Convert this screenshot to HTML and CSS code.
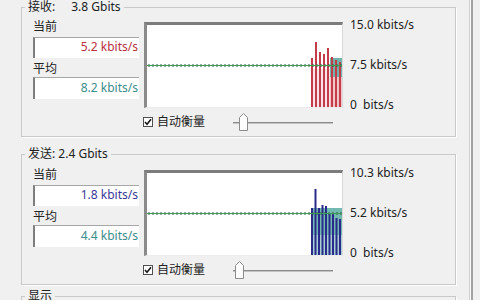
FILE: index.html
```html
<!DOCTYPE html>
<html lang="zh-CN">
<head>
  <meta charset="UTF-8" />
  <meta name="viewport" content="width=device-width, initial-scale=1.0"/>
  <title>网络流量</title>
  <link rel="stylesheet" href="styles.css">
</head>
<body>

<div class="janela">

  <!-- Receber -->
  <fieldset class="grupo primeiro">
    <legend>接收:<span class="total">3.8 Gbits</span></legend>
    <div class="corpo">
      <div class="valores">
        <div class="rotulo">当前</div>
        <div class="caixa rx">5.2 kbits/s</div>
        <div class="rotulo media">平均</div>
        <div class="caixa media cor-media">8.2 kbits/s</div>
      </div>
      <div class="grafico">
        <svg width="195" height="82" viewBox="0 0 195 82">
          <rect x="164" y="44" width="19" height="38" fill="#f8e4e6"/>
          <rect x="183" y="33" width="12" height="19" fill="#6fb3ab"/>
          <rect x="183" y="52" width="12" height="30" fill="#f1c4c8"/>
          <g fill="#c43b49">
            <rect x="164" y="33" width="2" height="49"/>
            <rect x="168" y="17" width="2" height="65"/>
            <rect x="172" y="27" width="2" height="55"/>
            <rect x="176" y="29" width="2" height="53"/>
            <rect x="180" y="23" width="2" height="59"/>
            <rect x="184" y="32" width="2" height="50"/>
            <rect x="188" y="35" width="2" height="47"/>
            <rect x="192" y="37" width="2" height="45"/>
          </g>
          <line x1="1.5" y1="40.5" x2="195" y2="40.5" stroke="#2f5f3c" stroke-width="3" stroke-dasharray="1 3"/>
          <line x1="0" y1="40.5" x2="195" y2="40.5" stroke="#3f9a58" stroke-width="1"/>
        </svg>
      </div>
      <div class="escala">
        <span>15.0 kbits/s</span>
        <span>7.5 kbits/s</span>
        <span>0  bits/s</span>
      </div>
      <div class="controles">
        <span class="check">
          <svg width="8" height="8" viewBox="0 0 8 8"><path d="M1 4 L3 6.2 L7 1.2" fill="none" stroke="#1a1a1a" stroke-width="1.6"/></svg>
        </span>
        <span class="check-texto">自动衡量</span>
        <div class="trilha">
          <span class="cursor" style="left: 6px;">
            <svg width="9" height="18" viewBox="0 0 9 18"><path d="M0.5 17.5 V4.5 L4.5 0.5 L8.5 4.5 V17.5 Z" fill="#fdfdfd" stroke="#8c8c8c"/></svg>
          </span>
        </div>
      </div>
    </div>
  </fieldset>

  <!-- Enviar -->
  <fieldset class="grupo">
    <legend>发送: 2.4 Gbits</legend>
    <div class="corpo">
      <div class="valores">
        <div class="rotulo">当前</div>
        <div class="caixa tx">1.8 kbits/s</div>
        <div class="rotulo media">平均</div>
        <div class="caixa media cor-media">4.4 kbits/s</div>
      </div>
      <div class="grafico">
        <svg width="195" height="82" viewBox="0 0 195 82">
          <rect x="165" y="35" width="30" height="27" fill="#72b9b2"/>
          <rect x="165" y="62" width="30" height="20" fill="#a9cfd3"/>
          <g fill="#2a2a8c">
            <rect x="164" y="35" width="2" height="47"/>
            <rect x="167.5" y="16" width="2" height="66"/>
            <rect x="171" y="35" width="2" height="47"/>
            <rect x="174.5" y="32" width="2" height="50"/>
            <rect x="178" y="33" width="2" height="49"/>
            <rect x="181.5" y="40" width="2" height="42"/>
            <rect x="185" y="41" width="2" height="41"/>
            <rect x="188.5" y="45" width="2" height="37"/>
            <rect x="192" y="46" width="2" height="36"/>
          </g>
          <line x1="1.5" y1="40.5" x2="195" y2="40.5" stroke="#2f5f3c" stroke-width="3" stroke-dasharray="1 3"/>
          <line x1="0" y1="40.5" x2="195" y2="40.5" stroke="#3f9a58" stroke-width="1"/>
        </svg>
      </div>
      <div class="escala">
        <span>10.3 kbits/s</span>
        <span>5.2 kbits/s</span>
        <span>0  bits/s</span>
      </div>
      <div class="controles">
        <span class="check">
          <svg width="8" height="8" viewBox="0 0 8 8"><path d="M1 4 L3 6.2 L7 1.2" fill="none" stroke="#1a1a1a" stroke-width="1.6"/></svg>
        </span>
        <span class="check-texto">自动衡量</span>
        <div class="trilha">
          <span class="cursor" style="left: 2px;">
            <svg width="9" height="18" viewBox="0 0 9 18"><path d="M0.5 17.5 V4.5 L4.5 0.5 L8.5 4.5 V17.5 Z" fill="#fdfdfd" stroke="#8c8c8c"/></svg>
          </span>
        </div>
      </div>
    </div>
  </fieldset>

  <!-- Exibir -->
  <fieldset class="grupo ultimo">
    <legend>显示</legend>
    <div class="vazio"></div>
  </fieldset>

</div>

</body>
</html>
```

FILE: styles.css
```css
html, body {
  margin: 0;
  height: 300px;
  overflow: hidden;
}
body {
  background-color: #f0f0f0;
  font-family: "Noto Sans", "Noto Sans CJK SC", sans-serif;
  font-size: 12px;
  color: #222;
}
.janela {
  width: 469px;
  height: 300px;
  border-right: 1px solid #cfcfcf;
  box-shadow: 1px 0 0 #fafafa, 3px 0 0 #a2a2a2;
}

/* Caixas de grupo */
.grupo {
  margin: 0 0 0 21px;
  width: 435px;
  box-sizing: border-box;
  border: 1px solid #c9c9c9;
  padding: 8px 0 5px 11px;
  box-shadow: 1px 1px 0 #fff;
  min-width: 0;
}
.grupo.primeiro {
  padding-top: 7px;
}
.grupo + .grupo {
  margin-top: 10px;
}
.grupo.ultimo {
  margin-top: 4px;
}
.grupo legend {
  padding: 0 3px;
  margin-left: -8px;
  line-height: 14px;
}
.grupo legend .total {
  margin-left: 16px;
}

.corpo {
  display: grid;
  grid-template-columns: 106px 199px 1fr;
  grid-template-rows: 87px 18px;
  column-gap: 5px;
  row-gap: 5px;
}

/* Valores atuais */
.rotulo {
  line-height: 12px;
  margin-bottom: 4px;
}
.rotulo.media {
  margin-top: 5px;
  margin-bottom: 2px;
}
.caixa {
  height: 21px;
  box-sizing: border-box;
  background-color: #fff;
  border-style: solid;
  border-width: 1px 0 0 2px;
  border-color: #a6a6a6 #fff #fff #7e7e7e;
  text-align: right;
  line-height: 18px;
  padding-right: 1px;
}
.caixa.media {
  height: 22px;
  line-height: 19px;
}
.rx { color: #b9323f; }
.tx { color: #3a3a98; }
.cor-media { color: #3b8c8c; }

/* Grafico */
.grafico {
  margin-top: 1px;
  height: 86px;
  box-sizing: border-box;
  background-color: #fff;
  border-style: solid;
  border-width: 3px 1px 1px 3px;
  border-color: #7c7c7c #dadada #ececec #8a8a8a;
}
.grafico svg {
  display: block;
}

.escala {
  margin-top: -2px;
  margin-left: 2px;
  height: 92px;
  display: flex;
  flex-direction: column;
  justify-content: space-between;
  white-space: pre;
}
.escala span {
  line-height: 12px;
}

/* Controles */
.controles {
  grid-column: 2 / 4;
  margin-left: -1px;
  display: flex;
  align-items: center;
}
.check {
  width: 10px;
  height: 10px;
  box-sizing: border-box;
  border: 1px solid #505050;
  background-color: #fff;
  display: flex;
  align-items: center;
  justify-content: center;
}
.check svg {
  display: block;
}
.check-texto {
  margin-left: 4px;
  line-height: 12px;
}
.trilha {
  position: relative;
  margin-left: 28px;
  width: 100px;
  height: 18px;
}
.trilha::before {
  content: "";
  display: block;
  margin-top: 9px;
  border-top: 1px solid #8a8a8a;
  border-bottom: 1px solid #c4c4c4;
}
.cursor {
  position: absolute;
  top: 0;
}
.cursor svg {
  display: block;
}

.vazio {
  height: 30px;
}
```
